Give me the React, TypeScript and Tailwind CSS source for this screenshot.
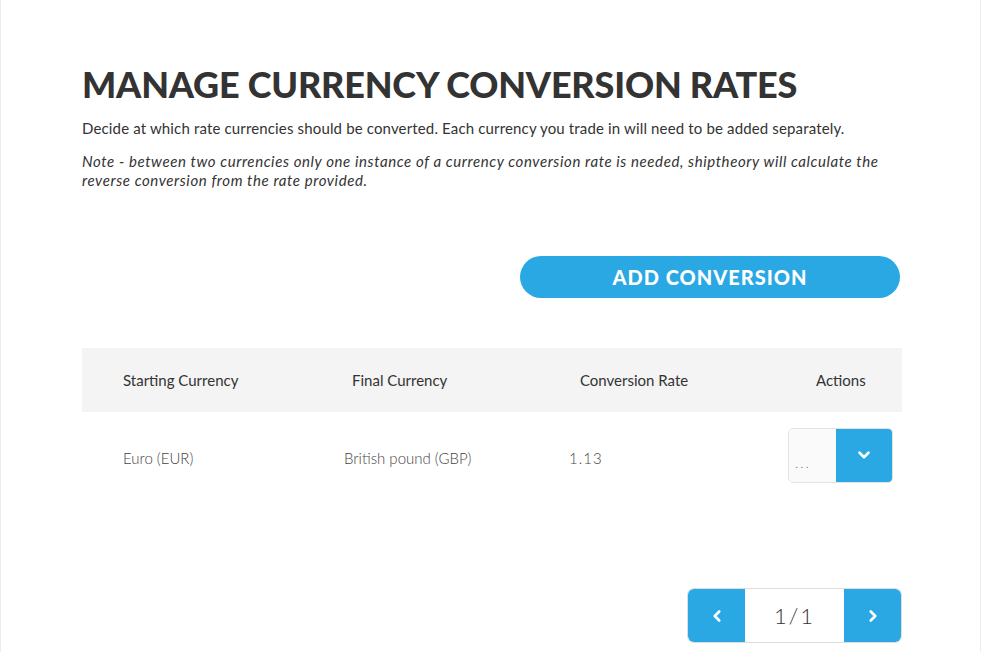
import { ChevronDown, ChevronLeft, ChevronRight } from "lucide-react";

const font = { fontFamily: "Lato, 'Noto Sans', sans-serif" };

export default function App() {
  return (
    <div className="min-h-[652px] w-[981px] border-x border-[#ececec] bg-white text-[#333]" style={font}>
      <div className="pl-[81px] pr-[80px] pt-[62px]">
        <h1 className="text-[36px] font-black leading-[44px] tracking-[-0.2px] text-[#333]">
          MANAGE CURRENCY CONVERSION RATES
        </h1>
        <p className="mt-[12px] text-[15px] leading-[20px] tracking-[0.15px] text-[#333]">
          Decide at which rate currencies should be converted. Each currency you trade in will need to be added separately.
        </p>
        <p className="mt-[14px] text-[15px] italic leading-[19px] tracking-[0.6px] text-[#333]">
          Note - between two currencies only one instance of a currency conversion rate is needed, shiptheory will calculate the reverse conversion from the rate provided.
        </p>

        <div className="mt-[66px] flex justify-end">
          <button className="h-[42px] w-[380px] rounded-full bg-[#29a8e3] text-[20px] font-black tracking-[1px] text-white">
            ADD CONVERSION
          </button>
        </div>

        {/* table */}
        <div className="mt-[50px] w-[820px]">
          <div className="flex h-[64px] items-center bg-[#f4f4f4] text-[15px] text-[#333]">
            <div className="w-[270px] pl-[41px]">Starting Currency</div>
            <div className="w-[228px]">Final Currency</div>
            <div className="w-[236px]">Conversion Rate</div>
            <div className="flex-1">Actions</div>
          </div>
          <div className="flex h-[86px] items-center text-[15px] font-light text-[#444]">
            <div className="mt-[6px] w-[262px] pl-[41px]">Euro (EUR)</div>
            <div className="mt-[6px] w-[225px]">British pound (GBP)</div>
            <div className="mt-[6px] w-[219px] tracking-[1px]">1.13</div>
            <div className="flex-1">
              <div className="flex h-[55px] w-[105px] overflow-hidden rounded-[5px] border border-[#e2e2e2]">
                <div className="flex w-[47px] items-end bg-[#fafafa] pb-[12px] pl-[6px] text-[14px] leading-none tracking-[2px] text-[#777]">
                  ...
                </div>
                <div className="flex flex-1 items-center justify-center bg-[#29a8e3]">
                  <ChevronDown className="h-[18px] w-[18px] text-white" strokeWidth={3.5} />
                </div>
              </div>
            </div>
          </div>
        </div>

        {/* pagination */}
        <div className="mt-[90px] flex w-[820px] justify-end">
          <div className="flex h-[55px] w-[215px] overflow-hidden rounded-[7px] border border-[#dddddd]">
            <div className="flex w-[57px] items-center justify-center bg-[#29a8e3]">
              <ChevronLeft className="h-[18px] w-[18px] text-white" strokeWidth={3.5} />
            </div>
            <div className="flex flex-1 items-center justify-center text-[22px] font-light tracking-[2px] text-[#333]">
              1/1
            </div>
            <div className="flex w-[57px] items-center justify-center bg-[#29a8e3]">
              <ChevronRight className="h-[18px] w-[18px] text-white" strokeWidth={3.5} />
            </div>
          </div>
        </div>
      </div>
    </div>
  );
}
